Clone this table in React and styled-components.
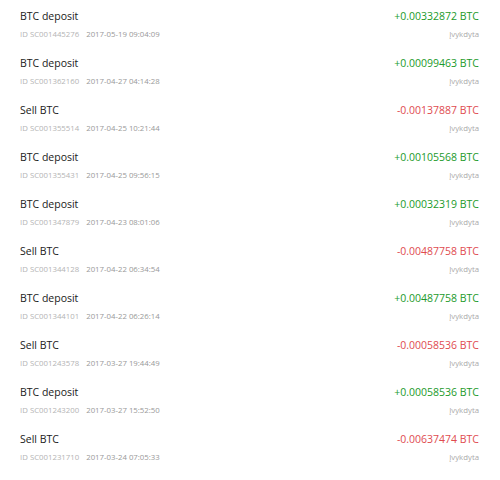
import React from 'react';
import styled, { createGlobalStyle } from 'styled-components';

const GlobalStyle = createGlobalStyle`
  body {
    margin: 0;
    background: #fff;
    font-family: "Open Sans", "Noto Sans", sans-serif;
  }
`;

const List = styled.div`
  width: 500px;
  padding: 0 21px 0 20px;
  box-sizing: border-box;
`;

const Row = styled.div`
  display: grid;
  grid-template-columns: 1fr auto;
  align-content: start;
  row-gap: 4px;
  height: 47px;
  padding-top: 8px;
  box-sizing: border-box;
`;

const Title = styled.div`
  font-size: 10.5px;
  line-height: 16px;
  color: #1a1a1a;
`;

const Amount = styled.div`
  font-size: 10.5px;
  line-height: 16px;
  text-align: right;
  color: ${p => (p.$negative ? '#e04b4f' : '#1b9a2a')};
`;

const Meta = styled.div`
  font-size: 7.8px;
  line-height: 12px;
  color: #999;
  white-space: nowrap;
`;

const MetaId = styled.span`
  color: #b4b4b4;
  margin-right: 7px;
`;

const Status = styled.div`
  font-size: 7.8px;
  line-height: 12px;
  color: #aaa;
  text-align: right;
`;

const rows = [
  ['BTC deposit', 'SC001445276', '2017-05-19 09:04:09', '+0.00332872'],
  ['BTC deposit', 'SC001362160', '2017-04-27 04:14:28', '+0.00099463'],
  ['Sell BTC', 'SC001355514', '2017-04-25 10:21:44', '-0.00137887'],
  ['BTC deposit', 'SC001355431', '2017-04-25 09:56:15', '+0.00105568'],
  ['BTC deposit', 'SC001347879', '2017-04-23 08:01:06', '+0.00032319'],
  ['Sell BTC', 'SC001344128', '2017-04-22 06:34:54', '-0.00487758'],
  ['BTC deposit', 'SC001344101', '2017-04-22 06:26:14', '+0.00487758'],
  ['Sell BTC', 'SC001243578', '2017-03-27 19:44:49', '-0.00058536'],
  ['BTC deposit', 'SC001243200', '2017-03-27 15:52:50', '+0.00058536'],
  ['Sell BTC', 'SC001231710', '2017-03-24 07:05:33', '-0.00637474'],
];

export default function App() {
  return (
    <>
      <GlobalStyle />
      <List>
        {rows.map(([title, id, date, amount]) => (
          <Row key={id}>
            <Title>{title}</Title>
            <Amount $negative={amount.startsWith('-')}>{amount} BTC</Amount>
            <Meta>
              <MetaId>ID {id}</MetaId>
              {date}
            </Meta>
            <Status>Įvykdyta</Status>
          </Row>
        ))}
      </List>
    </>
  );
}
